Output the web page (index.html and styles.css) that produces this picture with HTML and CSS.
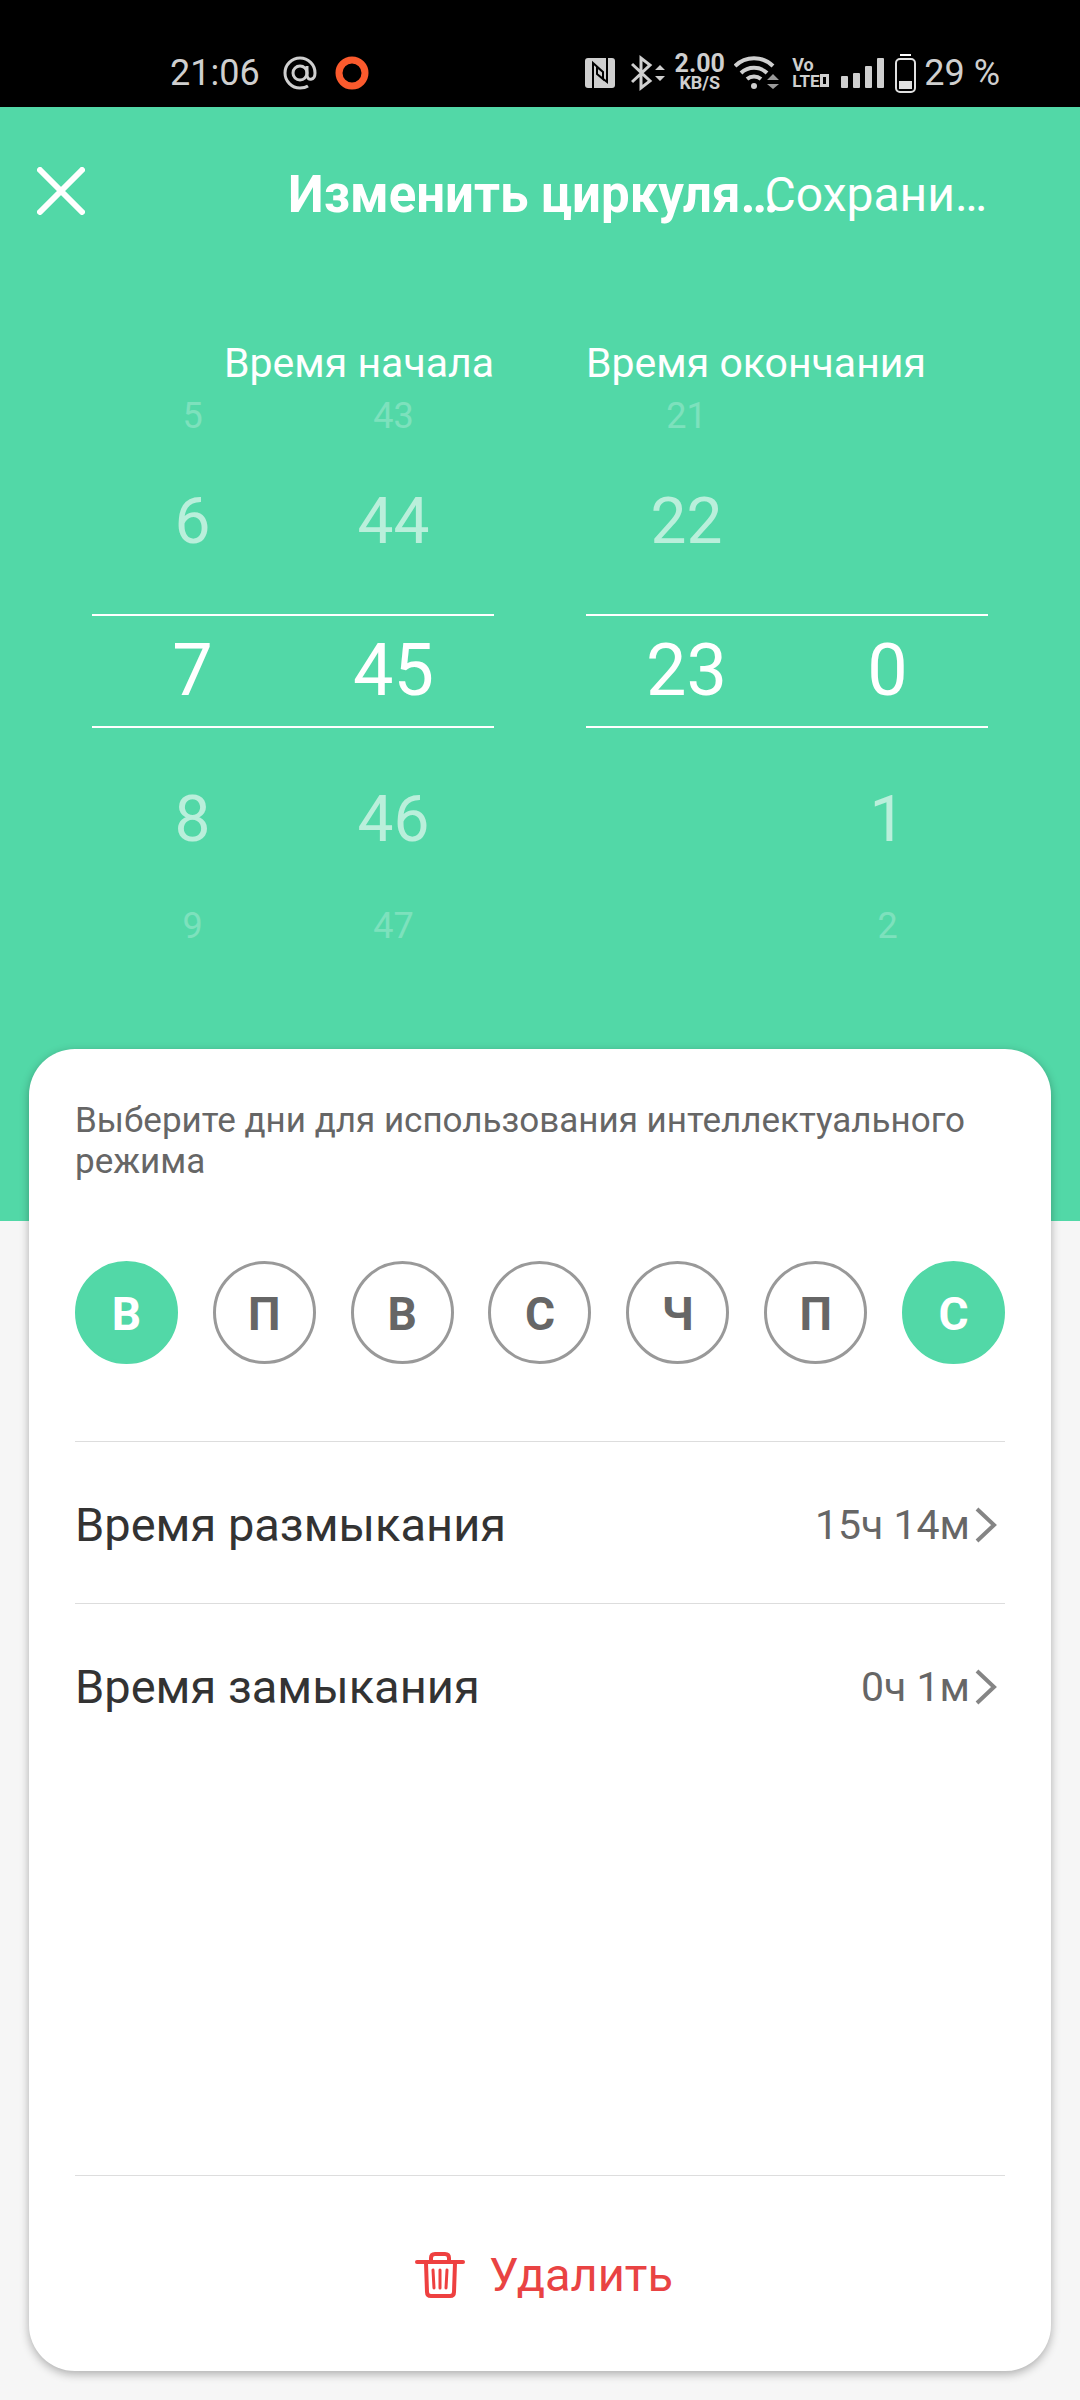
FILE: index.html
```html
<!DOCTYPE html>
<html lang="ru">
<head>
    <meta charset="UTF-8">
    <meta name="viewport" content="width=device-width, initial-scale=1">
    <title>Изменить циркуляцию</title>
    <link rel="stylesheet" href="styles.css">
</head>
<body>
    <div class="screen">
        <div class="status-bar">
            <span>21:06</span>
            <svg class="status-at" width="34" height="34" viewBox="0 0 34 34" fill="none" stroke="#cfcfcf" stroke-width="3">
                <circle cx="17" cy="17" r="7"/>
                <path d="M24 10v9c0 6 8 6 8-2A15 15 0 1 0 17 32q5 0 8-2"/>
            </svg>
            <svg class="status-ring" width="34" height="34" viewBox="0 0 34 34" fill="none" stroke="#fb5a2d" stroke-width="7">
                <circle cx="17" cy="17" r="13"/>
            </svg>
            <div class="status-right">
                <!-- NFC -->
                <svg width="38" height="40" viewBox="0 0 38 40">
                    <rect x="0" y="5" width="30" height="30" rx="3" fill="#cfcfcf"/>
                    <path d="M8 35V10l10 9v7l-6-5M22 5v24l-10-8v-7l6 5" fill="none" stroke="#000" stroke-width="2"/>
                </svg>
                <!-- Bluetooth -->
                <svg width="34" height="40" viewBox="0 0 34 40">
                    <path d="M1 11l18 17-9 7V5l9 7L1 29" fill="none" stroke="#cfcfcf" stroke-width="3"/>
                    <path d="M24 17l5-5 5 5zM24 23l5 5 5-5z" fill="#cfcfcf"/>
                </svg>
                <div class="speed">
                    <span class="speed-value">2.00</span>
                    <span class="speed-unit">KB/S</span>
                </div>
                <!-- Wi-Fi -->
                <svg width="50" height="40" viewBox="0 0 50 40">
                    <g fill="none" stroke="#cfcfcf" stroke-width="4">
                        <path d="M1 13a27 27 0 0 1 38 0"/>
                        <path d="M7 20a19 19 0 0 1 26 0"/>
                        <path d="M13 26a11 11 0 0 1 14 0"/>
                    </g>
                    <circle cx="20" cy="33" r="3" fill="#cfcfcf"/>
                    <path d="M33 27l6-6 6 6zM33 31l6 5 6-5z" fill="#9a9a9a"/>
                </svg>
                <div class="volte">
                    <span>Vo</span>
                    <span class="volte-bottom">LTE<i class="volte-box"></i></span>
                </div>
                <!-- Signal -->
                <svg width="46" height="40" viewBox="0 0 46 40" fill="#cfcfcf">
                    <rect x="0" y="23" width="7" height="12" rx="1"/>
                    <rect x="12" y="20" width="7" height="15" rx="1"/>
                    <rect x="24" y="13" width="7" height="22" rx="1"/>
                    <rect x="36" y="5" width="7" height="30" rx="1"/>
                </svg>
                <!-- Battery -->
                <svg width="21" height="40" viewBox="0 0 21 40">
                    <rect x="5" y="1" width="11" height="2" fill="#fff"/>
                    <rect x="1" y="6" width="19" height="33" rx="4" fill="none" stroke="#e0e0e0" stroke-width="2"/>
                    <rect x="4" y="28" width="13" height="8" fill="#e0e0e0"/>
                </svg>
                <span>29 %</span>
            </div>
        </div>

        <div class="hero">
            <header class="toolbar">
                <button class="close" aria-label="Закрыть">
                    <svg width="48" height="48" viewBox="0 0 48 48" fill="none" stroke="#fff" stroke-width="6" stroke-linecap="round">
                        <path d="M3 3l42 42M45 3L3 45"/>
                    </svg>
                </button>
                <h1 class="title">Изменить циркуля…</h1>
                <button class="save">Сохрани…</button>
            </header>

            <div class="pickers">
                <section class="picker">
                    <h2 class="picker-label picker-label-right">Время начала</h2>
                    <div class="wheel">
                        <span class="far">5</span><span class="far">43</span>
                        <span class="near">6</span><span class="near">44</span>
                        <span class="selected">7</span><span class="selected">45</span>
                        <span class="near">8</span><span class="near">46</span>
                        <span class="far">9</span><span class="far">47</span>
                    </div>
                </section>
                <section class="picker">
                    <h2 class="picker-label">Время окончания</h2>
                    <div class="wheel">
                        <span class="far">21</span><span class="far"></span>
                        <span class="near">22</span><span class="near"></span>
                        <span class="selected">23</span><span class="selected">0</span>
                        <span class="near"></span><span class="near">1</span>
                        <span class="far"></span><span class="far">2</span>
                    </div>
                </section>
            </div>
        </div>

        <main class="card">
            <p class="hint">Выберите дни для использования интеллектуального режима</p>
            <div class="days">
                <button class="day active" aria-pressed="true">В</button>
                <button class="day" aria-pressed="false">П</button>
                <button class="day" aria-pressed="false">В</button>
                <button class="day" aria-pressed="false">С</button>
                <button class="day" aria-pressed="false">Ч</button>
                <button class="day" aria-pressed="false">П</button>
                <button class="day active" aria-pressed="true">С</button>
            </div>
            <button class="row">
                <span>Время размыкания</span>
                <span class="row-value">15ч 14м</span>
                <svg width="30" height="36" viewBox="0 0 30 36" fill="none" stroke="#858585" stroke-width="4">
                    <path d="M2 2l17 16L2 34"/>
                </svg>
            </button>
            <button class="row">
                <span>Время замыкания</span>
                <span class="row-value">0ч 1м</span>
                <svg width="30" height="36" viewBox="0 0 30 36" fill="none" stroke="#858585" stroke-width="4">
                    <path d="M2 2l17 16L2 34"/>
                </svg>
            </button>
            <button class="delete">
                <svg width="50" height="48" viewBox="0 0 50 48" fill="none" stroke="#ee4040" stroke-width="4" stroke-linecap="round" stroke-linejoin="round">
                    <path d="M2 11h46"/>
                    <path d="M16 10V7q0-4 4-4h10q4 0 4 4v3"/>
                    <path d="M11 12l1 29q0 4 4 4h19q4 0 4-4l1-29"/>
                    <path d="M18 19l1 18M25 19v18M32 19l-1 18" stroke-width="3"/>
                </svg>
                Удалить
            </button>
        </main>
    </div>

    <script>
        document.querySelectorAll('.day').forEach((day) => {
            day.addEventListener('click', () => {
                const active = day.classList.toggle('active');
                day.setAttribute('aria-pressed', active);
            });
        });
    </script>
</body>
</html>
```

FILE: styles.css
```css
* {
    box-sizing: border-box;
}

body {
    margin: 0;
    background: #f6f6f6;
    font-family: Roboto, "Liberation Sans", sans-serif;
}

button {
    padding: 0;
    border: none;
    background: none;
    color: inherit;
    font: inherit;
    cursor: pointer;
}

svg {
    display: block;
    flex: none;
}

.screen {
    display: flex;
    flex-direction: column;
    min-height: 100vh;
}

/* status bar */
.status-bar {
    display: flex;
    align-items: center;
    height: 107px;
    padding: 38px 80px 0 170px;
    background: #000;
    color: #cfcfcf;
    font-size: 36px;
}

.status-at {
    margin-left: 23px;
}

.status-ring {
    margin-left: 18px;
}

.status-right {
    display: flex;
    align-items: center;
    gap: 8px;
    margin-left: auto;
    white-space: nowrap;
}

.speed {
    display: flex;
    flex-direction: column;
    align-items: center;
    width: 53px;
    font-weight: 700;
}

.speed-value {
    font-size: 25px;
    line-height: 21px;
}

.speed-unit {
    font-size: 18px;
    line-height: 18px;
}

.volte {
    display: flex;
    flex-direction: column;
    width: 41px;
    font-size: 18px;
    font-weight: 700;
    line-height: 16px;
}

.volte-bottom {
    display: flex;
    align-items: center;
    font-size: 17px;
}

.volte-box {
    width: 9px;
    height: 13px;
    border: 3px solid #cfcfcf;
}

/* green area */
.hero {
    padding-bottom: 281px;
    background: #52d8a7;
    color: #fff;
}

/* long title and action run into each other, the side columns may not grow */
.toolbar {
    display: grid;
    grid-template-columns: minmax(0, 1fr) 504px minmax(0, 1fr);
    align-items: center;
    height: 174px;
    padding: 0 37px;
}

.close {
    justify-self: start;
    padding-bottom: 6px;
}

.title {
    margin: 0;
    font-size: 51px;
    font-weight: 700;
    white-space: nowrap;
}

.save {
    justify-self: end;
    margin-right: 56px;
    font-size: 48px;
    white-space: nowrap;
}

.pickers {
    display: grid;
    grid-template-columns: 1fr 1fr;
    gap: 92px;
    padding: 54px 92px 0;
}

.picker-label {
    margin: 0 0 11px;
    font-size: 41px;
    font-weight: 400;
    line-height: 56px;
    white-space: nowrap;
}

.picker-label-right {
    text-align: right;
}

.wheel {
    display: grid;
    grid-template-columns: 1fr 1fr;
    grid-template-rows: 28px 184px 114px 184px 28px;
    text-align: center;
}

.far {
    opacity: 0.25;
    font-size: 36px;
    line-height: 28px;
}

.near {
    opacity: 0.6;
    font-size: 64px;
    line-height: 184px;
}

.selected {
    border-top: 2px solid #fff;
    border-bottom: 2px solid #fff;
    font-size: 72px;
    line-height: 110px;
}

/* settings card */
.card {
    display: flex;
    flex: 1;
    flex-direction: column;
    margin: -172px 29px 29px;
    padding: 51px 46px 0;
    border-radius: 46px;
    background: #fff;
    box-shadow: 0 3px 10px rgba(0, 0, 0, 0.3);
}

.hint {
    margin: 0;
    color: #666;
    font-size: 35px;
    line-height: 41px;
}

.days {
    display: flex;
    justify-content: space-between;
    padding: 79px 0 77px;
}

.day {
    width: 103px;
    height: 103px;
    padding-top: 2px;
    border: 3px solid #999;
    border-radius: 50%;
    color: #666;
    font-size: 46px;
    font-weight: 700;
}

.day.active {
    border-color: #52d8a7;
    background: #52d8a7;
    color: #fff;
}

.row {
    display: flex;
    align-items: center;
    height: 162px;
    padding-top: 4px;
    border-top: 1px solid #ddd;
    color: #333;
    font-size: 47px;
}

.row-value {
    margin-left: auto;
    margin-right: 5px;
    color: #666;
    font-size: 41px;
}

.delete {
    display: flex;
    align-items: center;
    justify-content: center;
    gap: 24px;
    height: 196px;
    margin-top: auto;
    padding: 2px 0 0 8px;
    border-top: 1px solid #ddd;
    color: #e94343;
    font-size: 47px;
}
```
